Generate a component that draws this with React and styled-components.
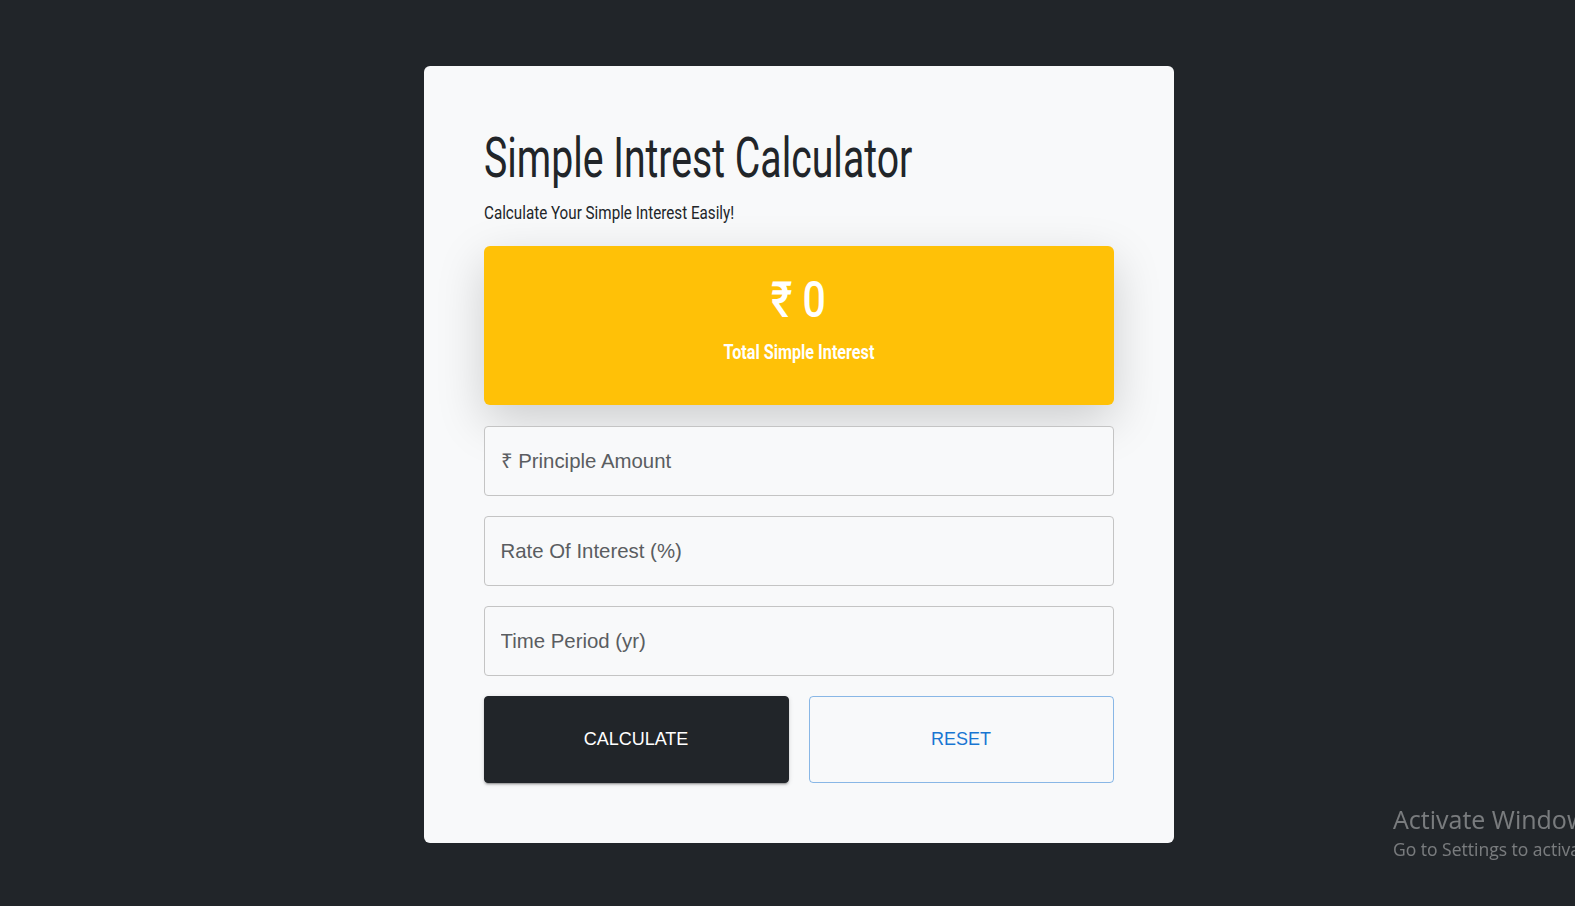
import React, { useState } from "react";
import styled, { createGlobalStyle } from "styled-components";

const GlobalStyle = createGlobalStyle`
  html, body {
    margin: 0;
    padding: 0;
    background: #212529;
    overflow: hidden;
  }
  * { box-sizing: border-box; }
`;

// No condensed face is installed, so the Barlow-like look is faked by squeezing Roboto.
const condensed = `Roboto, "Liberation Sans", sans-serif`;

const Page = styled.div`
  min-height: 906px;
  display: flex;
  justify-content: center;
  align-items: flex-start;
  padding: 66px 0 0 22px;
`;

const Card = styled.div`
  width: 750px;
  background: #f8f9fa;
  border-radius: 6px;
  padding: 60px;
  display: flex;
  flex-direction: column;
`;

const Squeeze = styled.span`
  display: inline-block;
  white-space: nowrap;
  transform: scaleX(${(p) => p.$scale || 0.7});
  transform-origin: ${(p) => p.$origin || "left"} center;
`;

const Title = styled.h1`
  margin: 0;
  font-family: ${condensed};
  font-weight: 400;
  font-size: 56px;
  line-height: 64px;
  color: #212529;
  white-space: nowrap;
`;

const Subtitle = styled.p`
  margin: 11px 0 21px;
  font-family: ${condensed};
  font-size: 19px;
  line-height: 24px;
  color: #212529;
  white-space: nowrap;
`;

const ResultBox = styled.div`
  height: 159px;
  padding-bottom: 16px;
  background: #ffc107;
  border-radius: 6px;
  box-shadow: 0 1rem 3rem rgba(0, 0, 0, 0.175);
  display: flex;
  flex-direction: column;
  align-items: center;
  justify-content: center;
  color: #fff;
  font-family: ${condensed};
  margin-bottom: 21px;
`;

const Amount = styled.div`
  font-size: 50px;
  line-height: 56px;
  font-weight: 500;
`;

const AmountLabel = styled.div`
  margin-top: 12px;
  font-size: 21px;
  line-height: 24px;
  font-weight: 700;
`;

const Field = styled.input`
  display: block;
  width: 100%;
  height: 70px;
  padding: 0 16px;
  margin-bottom: 20px;
  border: 1px solid #c4c4c4;
  border-radius: 4px;
  background: #f8f9fa;
  font-family: "Liberation Sans", Arial, sans-serif;
  font-size: 20.4px;
  color: #212529;
  outline: none;
  &::placeholder {
    color: #5a5d61;
  }
`;

const Actions = styled.div`
  display: grid;
  grid-template-columns: 1fr 1fr;
  gap: 20px;
`;

const Button = styled.button`
  height: 87px;
  border-radius: 4px;
  font-family: "Liberation Sans", Arial, sans-serif;
  font-size: 18px;
  cursor: pointer;
  border: 1px solid ${(p) => (p.$variant === "outline" ? "rgba(25,118,210,0.5)" : "#212529")};
  background: ${(p) => (p.$variant === "outline" ? "transparent" : "#212529")};
  color: ${(p) => (p.$variant === "outline" ? "#1976d2" : "#fff")};
  box-shadow: ${(p) =>
    p.$variant === "outline"
      ? "none"
      : "0 3px 1px -2px rgba(0,0,0,0.2), 0 2px 2px 0 rgba(0,0,0,0.14), 0 1px 5px 0 rgba(0,0,0,0.12)"};
`;

const Watermark = styled.div`
  position: fixed;
  left: 1393px;
  top: 803px;
  white-space: nowrap;
  color: rgba(255, 255, 255, 0.4);
  font-family: "Open Sans", "Noto Sans", sans-serif;
`;

const WatermarkTitle = styled.div`
  font-size: 25px;
  line-height: 32px;
`;

const WatermarkText = styled.div`
  font-size: 17.5px;
  line-height: 28px;
`;

export default function App() {
  const [principal, setPrincipal] = useState("");
  const [rate, setRate] = useState("");
  const [time, setTime] = useState("");
  const [interest, setInterest] = useState(0);

  const calculate = () => {
    setInterest((Number(principal) * Number(rate) * Number(time)) / 100);
  };
  const reset = () => {
    setPrincipal("");
    setRate("");
    setTime("");
    setInterest(0);
  };

  return (
    <>
      <GlobalStyle />
      <Page>
        <Card>
          <Title>
            <Squeeze $scale={0.7}>Simple Intrest Calculator</Squeeze>
          </Title>
          <Subtitle>
            <Squeeze $scale={0.8}>Calculate Your Simple Interest Easily!</Squeeze>
          </Subtitle>
          <ResultBox>
            <Amount>
              <Squeeze $scale={0.82} $origin="center">₹ {interest}</Squeeze>
            </Amount>
            <AmountLabel>
              <Squeeze $scale={0.77} $origin="center">Total Simple Interest</Squeeze>
            </AmountLabel>
          </ResultBox>
          <Field
            placeholder="₹ Principle Amount"
            value={principal}
            onChange={(e) => setPrincipal(e.target.value)}
          />
          <Field
            placeholder="Rate Of Interest (%)"
            value={rate}
            onChange={(e) => setRate(e.target.value)}
          />
          <Field
            placeholder="Time Period (yr)"
            value={time}
            onChange={(e) => setTime(e.target.value)}
          />
          <Actions>
            <Button onClick={calculate}>CALCULATE</Button>
            <Button $variant="outline" onClick={reset}>
              RESET
            </Button>
          </Actions>
        </Card>
      </Page>
      <Watermark>
        <WatermarkTitle>Activate Windows</WatermarkTitle>
        <WatermarkText>Go to Settings to activate Windows.</WatermarkText>
      </Watermark>
    </>
  );
}
